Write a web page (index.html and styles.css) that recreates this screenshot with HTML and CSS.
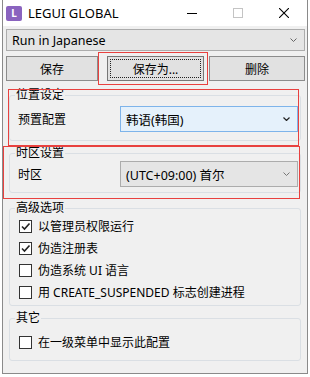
FILE: index.html
```html
<!DOCTYPE html>
<html lang="zh-CN">
<head>
    <meta charset="UTF-8" />
    <meta name="viewport" content="width=device-width, initial-scale=1" />
    <title>LEGUI GLOBAL</title>
    <link rel="stylesheet" href="styles.css">
</head>
<body>
    <div class="screen">
        <div class="window">
            <div class="titlebar">
                <span class="app-icon">L</span>
                <span class="title">LEGUI GLOBAL</span>
                <div class="caption-btns">
                    <span class="caption-btn">
                        <svg width="10" height="10" viewBox="0 0 10 10"><path d="M0 5.5 H10" stroke="#000" stroke-width="1"/></svg>
                    </span>
                    <span class="caption-btn">
                        <svg width="10" height="10" viewBox="0 0 10 10"><rect x="0.5" y="0.5" width="9" height="9" fill="none" stroke="#c4c4c4" stroke-width="1"/></svg>
                    </span>
                    <span class="caption-btn">
                        <svg width="10" height="10" viewBox="0 0 10 10"><path d="M0 0 L10 10 M10 0 L0 10" stroke="#000" stroke-width="1.1"/></svg>
                    </span>
                </div>
            </div>

            <div class="client">
                <div class="combo combo-profile">
                    <span class="combo-text">Run in Japanese</span>
                    <svg class="chevron" width="7" height="4" viewBox="0 0 7 4"><path d="M0.5 0.5 L3.5 3.5 L6.5 0.5" fill="none" stroke="#666" stroke-width="1"/></svg>
                </div>

                <div class="btn-row">
                    <button class="btn btn-save">保存</button>
                    <button class="btn btn-saveas"><span class="focus-ring">保存为...</span></button>
                    <button class="btn btn-delete">删除</button>
                </div>

                <fieldset class="group group-locale">
                    <legend>位置设定</legend>
                    <div class="field">
                        <span class="field-label">预置配置</span>
                        <div class="combo combo-field combo-hot">
                            <span class="combo-text">韩语(韩国)</span>
                            <svg class="chevron" width="7" height="4" viewBox="0 0 7 4"><path d="M0.5 0.5 L3.5 3.5 L6.5 0.5" fill="none" stroke="#222" stroke-width="1.2"/></svg>
                        </div>
                    </div>
                </fieldset>

                <fieldset class="group group-timezone">
                    <legend>时区设置</legend>
                    <div class="field">
                        <span class="field-label">时区</span>
                        <div class="combo combo-field">
                            <span class="combo-text">(UTC+09:00) 首尔</span>
                            <svg class="chevron" width="7" height="4" viewBox="0 0 7 4"><path d="M0.5 0.5 L3.5 3.5 L6.5 0.5" fill="none" stroke="#777" stroke-width="1"/></svg>
                        </div>
                    </div>
                </fieldset>

                <fieldset class="group group-advanced">
                    <legend>高级选项</legend>
                    <div class="check-list">
                        <label class="check-row"><span class="check-box checked"><svg width="11" height="11" viewBox="0 0 11 11"><path d="M2 5.5 L4.5 8 L9.5 2.5" fill="none" stroke="#222" stroke-width="1.6"/></svg></span>以管理员权限运行</label>
                        <label class="check-row"><span class="check-box checked"><svg width="11" height="11" viewBox="0 0 11 11"><path d="M2 5.5 L4.5 8 L9.5 2.5" fill="none" stroke="#222" stroke-width="1.6"/></svg></span>伪造注册表</label>
                        <label class="check-row"><span class="check-box"></span>伪造系统 UI 语言</label>
                        <label class="check-row"><span class="check-box"></span>用 CREATE_SUSPENDED 标志创建进程</label>
                    </div>
                </fieldset>

                <fieldset class="group group-other">
                    <legend>其它</legend>
                    <div class="check-list">
                        <label class="check-row"><span class="check-box"></span>在一级菜单中显示此配置</label>
                    </div>
                </fieldset>
            </div>
        </div>

        <!-- annotation boxes drawn over the window -->
        <div class="mark mark-saveas"></div>
        <div class="mark mark-locale"></div>
        <div class="mark mark-timezone"></div>
    </div>
</body>
</html>
```

FILE: styles.css
```css
body {
    margin: 0;
    background: #fff;
    font-family: 'Noto Sans', 'Noto Sans CJK SC', sans-serif;
    font-size: 12px;
    color: #000;
}
.screen {
    position: relative;
    width: 310px;
    height: 377px;
    overflow: hidden;
}
.window {
    margin-left: 2px;
    width: 306px;
    height: 374px;
    box-sizing: border-box;
    border: 1px solid #8a8a8a;
    border-top: none;
    background: #f0f0f0;
    display: flex;
    flex-direction: column;
}
.titlebar {
    height: 26px;
    background: #fff;
    display: flex;
    align-items: center;
    padding-left: 3px;
}
.app-icon {
    width: 16px;
    height: 15px;
    border-radius: 2px;
    background: #8a63bf;
    color: #fff;
    font-size: 10px;
    font-weight: 700;
    line-height: 15px;
    text-align: center;
}
.title {
    margin-left: 6px;
    font-size: 13px;
}
.caption-btns {
    margin-left: auto;
    display: flex;
    height: 26px;
}
.caption-btn {
    width: 46px;
    display: flex;
    align-items: center;
    justify-content: center;
}
.client {
    flex: 1;
    padding: 3px 2px 0 3px;
}
.combo {
    box-sizing: border-box;
    display: flex;
    align-items: center;
    border: 1px solid #acacac;
    background: #e5e5e5;
}
.combo-text {
    flex: 1;
    padding-left: 5px;
    white-space: nowrap;
}
.chevron {
    margin-right: 7px;
}
.combo-profile {
    height: 22px;
}
.combo-profile .combo-text {
    font-size: 12.5px;
}
.btn-row {
    display: flex;
    margin-top: 5px;
    height: 25px;
}
.btn {
    box-sizing: border-box;
    height: 25px;
    padding: 0;
    border: 1px solid #8c8c8c;
    background: #e1e1e1;
    font-family: inherit;
    font-size: 12px;
    color: #000;
    display: flex;
    align-items: center;
    justify-content: center;
}
.btn-save {
    width: 92px;
}
.btn-saveas {
    width: 97px;
    margin-left: 9px;
    border-color: #777;
}
.btn-delete {
    width: 96px;
    margin-left: 5px;
}
.focus-ring {
    align-self: stretch;
    flex: 1;
    margin: 2px;
    border: 1px dotted #222;
    display: flex;
    align-items: center;
    justify-content: center;
}
.group {
    margin: 0 4px 0 3px;
    padding: 0 2px 0 8px;
    border: 1px solid #dadfe4;
    border-radius: 3px;
    min-width: 0;
}
.group legend {
    margin-left: -3px;
    padding: 0 1px;
    line-height: 16px;
}
.group-locale {
    margin-top: 6px;
    padding-top: 3px;
    padding-bottom: 8px;
}
.group-timezone {
    margin-top: 4px;
    padding-top: 0;
    padding-bottom: 5px;
}
.group-advanced {
    margin-top: 7px;
    padding-bottom: 2px;
}
.group-advanced .check-list {
    margin-top: -1px;
}
.group-other {
    margin-top: 4px;
    padding-top: 5px;
    padding-bottom: 7px;
}
.field {
    display: flex;
    align-items: center;
}
.field-label {
    width: 102px;
}
.combo-field {
    flex: 1;
    height: 26px;
}
.combo-field .combo-text {
    font-size: 12.5px;
}
.combo-hot {
    background: #e5f1fb;
    border-color: #7eb4ea;
}
.check-row {
    height: 22px;
    display: flex;
    align-items: center;
}
.check-box {
    box-sizing: border-box;
    width: 13px;
    height: 13px;
    margin-left: 1px;
    margin-right: 6px;
    border: 1px solid #333;
    background: #fff;
    display: flex;
    align-items: center;
    justify-content: center;
}
.mark {
    position: absolute;
    box-sizing: border-box;
    border: 1px solid #e8413f;
}
.mark-saveas {
    left: 98px;
    top: 52px;
    width: 110px;
    height: 33px;
}
.mark-locale {
    left: 8px;
    top: 89px;
    width: 291px;
    height: 57px;
}
.mark-timezone {
    left: 3px;
    top: 146px;
    width: 297px;
    height: 53px;
}
```
